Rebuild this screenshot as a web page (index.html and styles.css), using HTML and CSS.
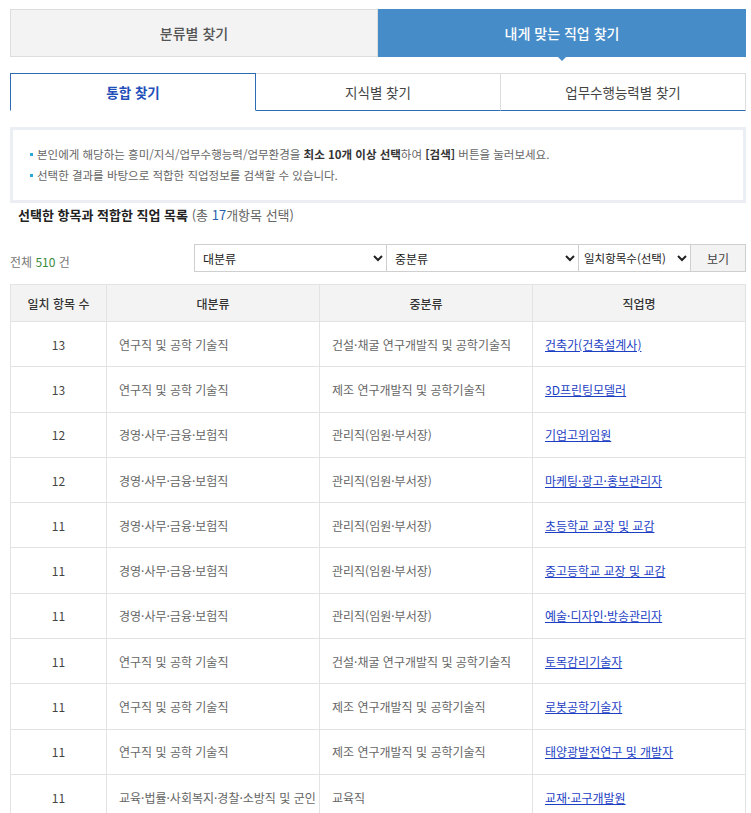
FILE: index.html
```html
<!DOCTYPE html>
<html lang="ko">
<head>
  <meta charset="UTF-8">
  <title>내게 맞는 직업 찾기</title>
  <link rel="stylesheet" href="styles.css">
</head>
<body>
  <div class="wrap">
    <!-- 상단 탭 -->
    <div class="main-tabs">
      <a class="main-tab">분류별 찾기</a>
      <a class="main-tab on">내게 맞는 직업 찾기</a>
    </div>

    <!-- 하위 탭 -->
    <div class="sub-tabs">
      <a class="sub-tab on">통합 찾기</a>
      <a class="sub-tab">지식별 찾기</a>
      <a class="sub-tab">업무수행능력별 찾기</a>
    </div>

    <div class="info-box">
      <ul>
        <li>본인에게 해당하는 흥미/지식/업무수행능력/업무환경을 <b>최소 10개 이상 선택</b>하여 <b>[검색]</b> 버튼을 눌러보세요.</li>
        <li>선택한 결과를 바탕으로 적합한 직업정보를 검색할 수 있습니다.</li>
      </ul>
    </div>

    <h3 class="result-title">선택한 항목과 적합한 직업 목록 <span>(총 <em>17</em>개항목 선택)</span></h3>

    <div class="result-bar">
      <p class="total">전체 <em>510</em> 건</p>
      <div class="filters">
        <select class="sel sel-large"><option>대분류</option></select>
        <select class="sel sel-mid"><option>중분류</option></select>
        <select class="sel sel-count"><option>일치항목수(선택)</option></select>
        <button class="btn-view">보기</button>
      </div>
    </div>

    <table class="job-table">
      <colgroup>
        <col style="width: 96px">
        <col style="width: 213px">
        <col style="width: 213px">
        <col>
      </colgroup>
      <thead>
        <tr>
          <th>일치 항목 수</th>
          <th>대분류</th>
          <th>중분류</th>
          <th>직업명</th>
        </tr>
      </thead>
      <tbody>
        <tr><td class="num">13</td><td>연구직 및 공학 기술직</td><td>건설·채굴 연구개발직 및 공학기술직</td><td><a href="#">건축가(건축설계사)</a></td></tr>
        <tr><td class="num">13</td><td>연구직 및 공학 기술직</td><td>제조 연구개발직 및 공학기술직</td><td><a href="#">3D프린팅모델러</a></td></tr>
        <tr><td class="num">12</td><td>경영·사무·금융·보험직</td><td>관리직(임원·부서장)</td><td><a href="#">기업고위임원</a></td></tr>
        <tr><td class="num">12</td><td>경영·사무·금융·보험직</td><td>관리직(임원·부서장)</td><td><a href="#">마케팅·광고·홍보관리자</a></td></tr>
        <tr><td class="num">11</td><td>경영·사무·금융·보험직</td><td>관리직(임원·부서장)</td><td><a href="#">초등학교 교장 및 교감</a></td></tr>
        <tr><td class="num">11</td><td>경영·사무·금융·보험직</td><td>관리직(임원·부서장)</td><td><a href="#">중고등학교 교장 및 교감</a></td></tr>
        <tr><td class="num">11</td><td>경영·사무·금융·보험직</td><td>관리직(임원·부서장)</td><td><a href="#">예술·디자인·방송관리자</a></td></tr>
        <tr><td class="num">11</td><td>연구직 및 공학 기술직</td><td>건설·채굴 연구개발직 및 공학기술직</td><td><a href="#">토목감리기술자</a></td></tr>
        <tr><td class="num">11</td><td>연구직 및 공학 기술직</td><td>제조 연구개발직 및 공학기술직</td><td><a href="#">로봇공학기술자</a></td></tr>
        <tr><td class="num">11</td><td>연구직 및 공학 기술직</td><td>제조 연구개발직 및 공학기술직</td><td><a href="#">태양광발전연구 및 개발자</a></td></tr>
        <tr><td class="num">11</td><td>교육·법률·사회복지·경찰·소방직 및 군인</td><td>교육직</td><td><a href="#">교재·교구개발원</a></td></tr>
      </tbody>
    </table>
  </div>
</body>
</html>
```

FILE: styles.css
```css
:root {
  --blue: #468cc8;
  --tab-blue: #2b6cb5;
  --line: #dddddd;
  --text: #555555;
  --link: #1d3fc4;
}

* {
  box-sizing: border-box;
}

body {
  margin: 0;
  font-family: "Noto Sans CJK KR", "Noto Sans", sans-serif;
  color: var(--text);
  background: #fff;
}

.wrap {
  padding: 9px 5px 0 10px;
}

/* 상단 탭 */
.main-tabs {
  display: flex;
}

.main-tab {
  flex: 1;
  height: 48px;
  display: flex;
  align-items: center;
  justify-content: center;
  font-size: 14px;
  font-weight: 500;
  color: #555;
  background: #f3f3f3;
  border: 1px solid var(--line);
  position: relative;
}

.main-tab.on {
  background: var(--blue);
  border-color: var(--blue);
  color: #fff;
}

.main-tab.on::after {
  content: "";
  position: absolute;
  left: 50%;
  bottom: -5px;
  margin-left: -5px;
  border-left: 5px solid transparent;
  border-right: 5px solid transparent;
  border-top: 5px solid var(--blue);
}

/* 하위 탭 */
.sub-tabs {
  display: flex;
  margin-top: 16px;
}

.sub-tab {
  flex: 1;
  height: 38px;
  display: flex;
  align-items: center;
  justify-content: center;
  font-size: 13.5px;
  color: #444;
  border-top: 1px solid var(--line);
  border-right: 1px solid var(--line);
  border-bottom: 1px solid var(--tab-blue);
}

.sub-tab.on {
  color: #1f4fb8;
  font-weight: 700;
  border: 1px solid var(--tab-blue);
  border-bottom-color: #fff;
}

/* 안내 박스 */
.info-box {
  margin-top: 16px;
  border: 3px solid #ebeef3;
  padding: 14px 17px 12px;
  height: 76px;
}

.info-box ul {
  margin: 0;
  padding: 0;
  list-style: none;
}

.info-box li {
  position: relative;
  padding-left: 7px;
  font-size: 11.5px;
  line-height: 21px;
  color: #666;
}

.info-box li::before {
  content: "";
  position: absolute;
  left: 0;
  top: 9px;
  width: 3px;
  height: 3px;
  background: #2aa9d8;
}

.info-box b {
  color: #333;
  font-weight: 700;
}

.result-title {
  margin: 2px 0 0 8px;
  font-size: 13px;
  font-weight: 700;
  color: #222;
  line-height: 20px;
}

.result-title span {
  font-weight: 400;
  color: #666;
}

.result-title em {
  font-style: normal;
  color: #2a5fb0;
}

/* 결과 바 */
.result-bar {
  display: flex;
  align-items: flex-end;
  justify-content: space-between;
  margin-top: 19px;
}

.total {
  margin: 0 0 2px;
  font-size: 12px;
  color: #777;
}

.total em {
  font-style: normal;
  color: #3b8a3b;
}

.filters {
  display: flex;
}

.sel {
  height: 28px;
  font-family: inherit;
  font-size: 12px;
  color: #222;
  border: 1px solid #cfcfcf;
  background: #fff;
  padding: 0 4px;
  margin-right: -1px;
}

.sel-large,
.sel-mid {
  width: 193px;
}

.sel-count {
  width: 113px;
  padding: 0 0 0 1px;
  font-size: 11.5px;
}

.btn-view {
  width: 56px;
  height: 28px;
  font-family: inherit;
  font-size: 12px;
  color: #444;
  background: #f3f3f3;
  border: 1px solid #cfcfcf;
}

/* 테이블 */
.job-table {
  width: 736px;
  margin-top: 12px;
  border-collapse: collapse;
  table-layout: fixed;
  font-size: 12px;
}

.job-table th,
.job-table td {
  border: 1px solid #e3e3e3;
}

.job-table th {
  height: 37px;
  background: #f3f3f3;
  font-weight: 500;
  color: #333;
}

.job-table td {
  height: 45.3px;
  padding: 0 12px;
  color: #666;
  white-space: nowrap;
}

.job-table td.num {
  text-align: center;
  color: #444;
}

.job-table a {
  color: var(--link);
}
```
